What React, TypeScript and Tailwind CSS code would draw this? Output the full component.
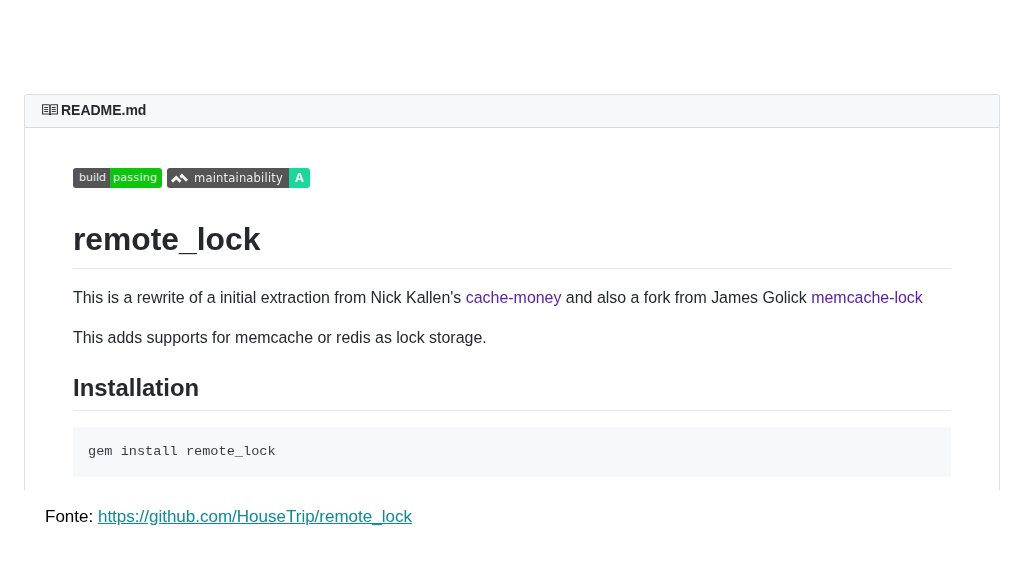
import React from 'react';

function BookIcon() {
  return (
    <svg width="16" height="14" viewBox="0 0 16 14" fill="none" stroke="#33383e" strokeWidth="1.100">
      <path d="M.6 1.800h5.900c.8 0 1.500.5 1.500 1.200v9c0-.6-.7-1-1.500-1H.6z" />
      <path d="M15.400 1.800H9.500c-.8 0-1.500.5-1.500 1.200v9c0-.6.7-1 1.500-1h5.900z" />
      <path d="M2.200 4.500h4M2.200 6.500h4M2.200 8.500h4M9.800 4.500h4M9.800 6.500h4M9.800 8.500h4" />
    </svg>
  );
}

function MountainIcon() {
  return (
    <svg width="17" height="10" viewBox="0 0 17 10" fill="#f5f5f5">
      <path d="M0 7.600 5.200 2.400l5.400 5.400-2 2-3.400-3.400-3.300 3.300z" />
      <path d="M8.600 2.900 10.900.6 17 6.700 15 8.700l-4.100-4.100-.8.800z" />
    </svg>
  );
}

function Badges() {
  return (
    <div className="flex gap-[5px] text-[11.500px] leading-[20px] h-[20px] font-['DejaVu_Sans',sans-serif] tracking-[0.2px] text-[#eeeeee]">
      <div className="flex rounded-[3px] overflow-hidden">
        <span className="w-[37px] bg-[#555555] pl-[6px] text-[11px] tracking-normal">build</span>
        <span className="w-[52px] bg-[#0ec50e] pl-[3px] text-[11px] tracking-[0.3px]">passing</span>
      </div>
      <div className="flex rounded-[3px] overflow-hidden">
        <span className="w-[122px] bg-[#555555] flex items-center gap-[6px] pl-[4px]">
          <MountainIcon />
          maintainability
        </span>
        <span className="w-[21px] bg-[#1cd79b] text-center font-bold">A</span>
      </div>
    </div>
  );
}

export default function App() {
  return (
    <div className="w-[1024px] h-[576px] bg-white overflow-hidden pt-[94px] font-['Liberation_Sans',Arial,sans-serif]">
      <div className="ml-[24px] w-[976px] h-[396px] border-x border-t border-[#dedede] rounded-t-[3px] overflow-hidden blur-[0.4px]">
        <div className="h-[33px] bg-[#f6f8fa] border-b border-[#dadada] flex items-center gap-[3px] pl-[17px] pb-[2px] text-[14px] tracking-[-0.02px] font-bold text-[#24292e]">
          <BookIcon />
          README.md
        </div>
        <div className="px-[48px] pt-[40px] text-[#24292e]">
          <Badges />
          <h1 className="mt-[31px] text-[31.800px] leading-[40px] font-bold pb-[9px] border-b border-[#e6e8ea]">remote_lock</h1>
          <p className="mt-[17px] text-[15.940px] leading-[24px]">
            This is a rewrite of a initial extraction from Nick Kallen's <span className="text-[#5b21a8]">cache-money</span> and also a fork from James Golick <span className="text-[#5b21a8]">memcache-lock</span>
          </p>
          <p className="mt-[16px] text-[15.940px] leading-[24px]">This adds supports for memcache or redis as lock storage.</p>
          <h2 className="mt-[23px] text-[23.900px] leading-[30px] font-bold pb-[7px] border-b border-[#e6e8ea]">Installation</h2>
          <div className="mt-[16px] h-[50px] bg-[#f6f8fa] pl-[15px] flex items-center font-['Liberation_Mono',monospace] text-[13.600px] text-[#3a3f45]">
            gem install remote_lock
          </div>
        </div>
      </div>
      <div className="pl-[45px] pt-[17px] text-[17px] leading-[20px] text-black blur-[0.3px]">
        Fonte: <a className="text-[#0e8a96] underline">https://github.com/HouseTrip/remote_lock</a>
      </div>
    </div>
  );
}
